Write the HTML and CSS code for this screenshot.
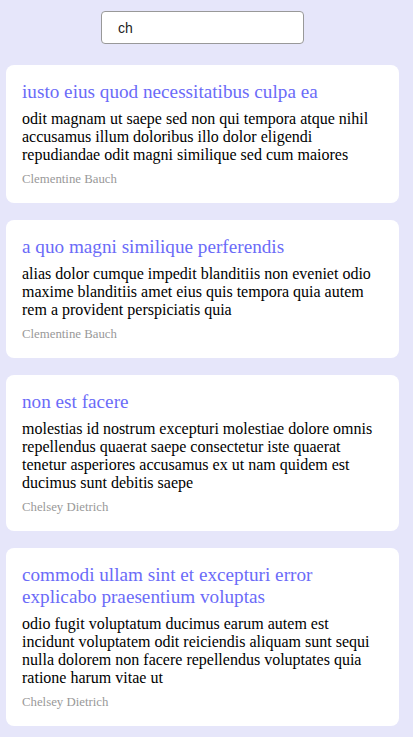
FILE: index.html
```html
<!DOCTYPE html>
<html>
<head>
<meta charset="utf-8">
<link rel="stylesheet" href="styles.css">
</head>
<body>
<div class="search-wrap"><input class="search" type="text" value="ch"></div>
<div class="list">
  <div class="card">
    <h2 class="title">iusto eius quod necessitatibus culpa ea</h2>
    <p class="body">odit magnam ut saepe sed non qui tempora atque nihil accusamus illum doloribus illo dolor eligendi repudiandae odit magni similique sed cum maiores</p>
    <div class="author">Clementine Bauch</div>
  </div>
  <div class="card">
    <h2 class="title">a quo magni similique perferendis</h2>
    <p class="body">alias dolor cumque impedit blanditiis non eveniet odio maxime blanditiis amet eius quis tempora quia autem rem a provident perspiciatis quia</p>
    <div class="author">Clementine Bauch</div>
  </div>
  <div class="card">
    <h2 class="title">non est facere</h2>
    <p class="body">molestias id nostrum excepturi molestiae dolore omnis repellendus quaerat saepe consectetur iste quaerat tenetur asperiores accusamus ex ut nam quidem est ducimus sunt debitis saepe</p>
    <div class="author">Chelsey Dietrich</div>
  </div>
  <div class="card">
    <h2 class="title">commodi ullam sint et excepturi error explicabo praesentium voluptas</h2>
    <p class="body">odio fugit voluptatum ducimus earum autem est incidunt voluptatem odit reiciendis aliquam sunt sequi nulla dolorem non facere repellendus voluptates quia ratione harum vitae ut</p>
    <div class="author">Chelsey Dietrich</div>
  </div>
</div>
</body>
</html>
```
FILE: styles.css
```css
html, body {
  margin: 0;
  padding: 0;
  background: #e6e6fa;
  font-family: "Liberation Serif", "Times New Roman", serif;
  font-size: 16px;
}
.search-wrap {
  display: flex;
  justify-content: center;
  padding: 11px 8px 0 0;
}
.search {
  box-sizing: border-box;
  width: 203px;
  height: 33px;
  border: 1px solid #999;
  border-radius: 4px;
  padding: 0 16px;
  font-family: "Liberation Sans", Arial, sans-serif;
  font-size: 14px;
  color: #222;
  background: #fff;
  outline: none;
}
.list {
  display: flex;
  flex-direction: column;
  gap: 17px;
  padding: 21px 14px 10px 6px;
}
.card {
  background: #fff;
  border-radius: 8px;
  padding: 16px;
}
.title {
  margin: 0 0 7px;
  font-weight: normal;
  font-size: 1.2em;
  color: #6b6bf8;
}
.body {
  margin: 0;
  font-size: 1em;
  color: #000;
}
.author {
  margin-top: 8px;
  font-size: 0.8em;
  color: #999;
}
```
